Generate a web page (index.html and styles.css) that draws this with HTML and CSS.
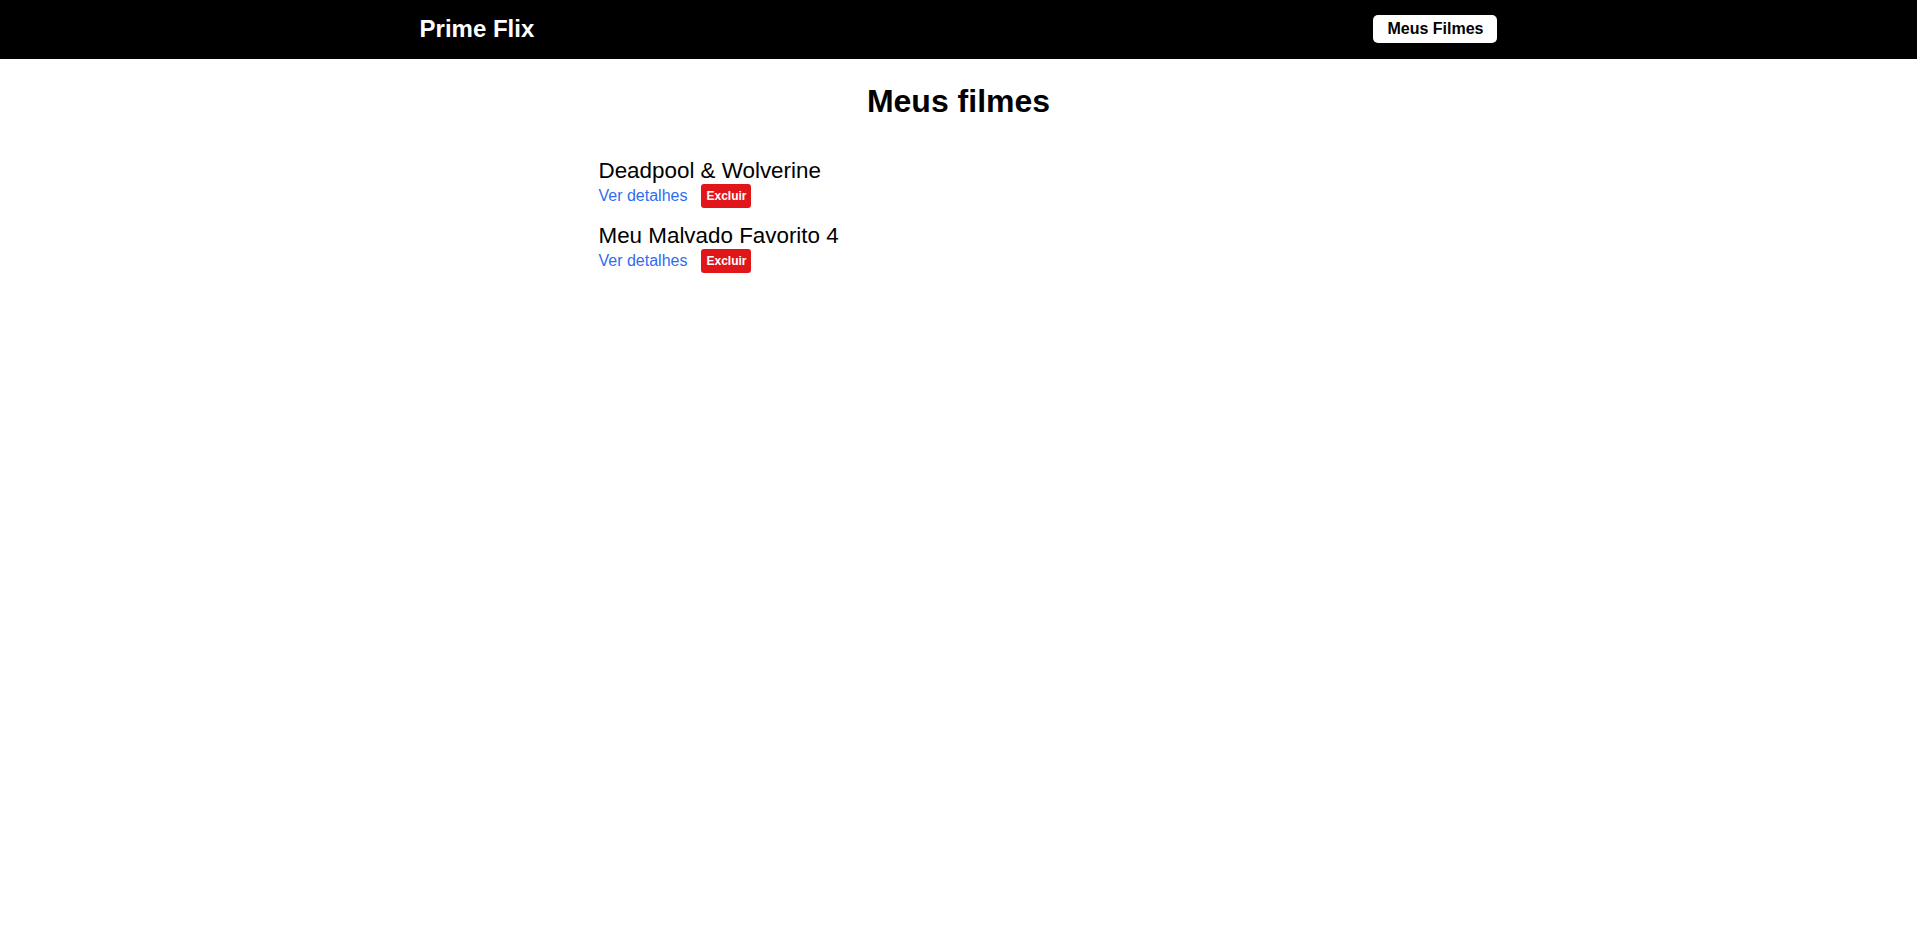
FILE: index.html
```html
<!DOCTYPE html>
<html lang="pt-BR">
<head>
<meta charset="utf-8">
<title>Prime Flix</title>
<link rel="stylesheet" href="styles.css">
</head>
<body>
<header class="header">
  <a class="logo" href="#">Prime Flix</a>
  <a class="favoritos" href="#">Meus Filmes</a>
</header>
<main class="meus-filmes">
  <h1 class="titulo">Meus filmes</h1>
  <ul class="lista">
    <li class="item">
      <span class="nome">Deadpool &amp; Wolverine</span>
      <div class="acoes">
        <a class="detalhes" href="#">Ver detalhes</a>
        <button class="excluir">Excluir</button>
      </div>
    </li>
    <li class="item">
      <span class="nome">Meu Malvado Favorito 4</span>
      <div class="acoes">
        <a class="detalhes" href="#">Ver detalhes</a>
        <button class="excluir">Excluir</button>
      </div>
    </li>
  </ul>
</main>
</body>
</html>
```
FILE: styles.css
```css
* { box-sizing: border-box; }
body {
  margin: 0;
  font-family: "Liberation Sans", Arial, sans-serif;
  background: #fff;
  color: #000;
}
.header {
  height: 59px;
  background: #000;
  display: flex;
  align-items: center;
  justify-content: space-around;
}
.logo {
  color: #fff;
  text-decoration: none;
  font-size: 24px;
  font-weight: bold;
  line-height: 28px;
  margin-top: -2px;
}
.favoritos {
  background: #fff;
  color: #000;
  text-decoration: none;
  font-size: 16px;
  font-weight: bold;
  height: 28px;
  line-height: 28px;
  padding: 0 14px;
  border-radius: 5px;
  margin-top: -2px;
}
.meus-filmes {
  max-width: 720px;
  margin: 0 auto;
}
.titulo {
  text-align: center;
  font-size: 32px;
  margin: 24px 0 0;
  line-height: 37px;
}
.lista {
  list-style: none;
  margin: 38px 0 0;
  padding: 0;
  display: flex;
  flex-direction: column;
  gap: 15px;
}
.item {
  display: flex;
  flex-direction: column;
}
.nome {
  font-size: 22.4px;
  line-height: 25px;
}
.acoes {
  display: flex;
  align-items: center;
  gap: 14px;
  margin-top: 1px;
}
.detalhes {
  color: #2f6cf0;
  text-decoration: none;
  font-size: 16px;
  line-height: 18px;
}
.excluir {
  background: #e0161b;
  color: #fff;
  border: none;
  border-radius: 3px;
  font-family: "Liberation Sans", Arial, sans-serif;
  font-size: 12px;
  font-weight: bold;
  height: 24px;
  padding: 0 5px;
}
```
